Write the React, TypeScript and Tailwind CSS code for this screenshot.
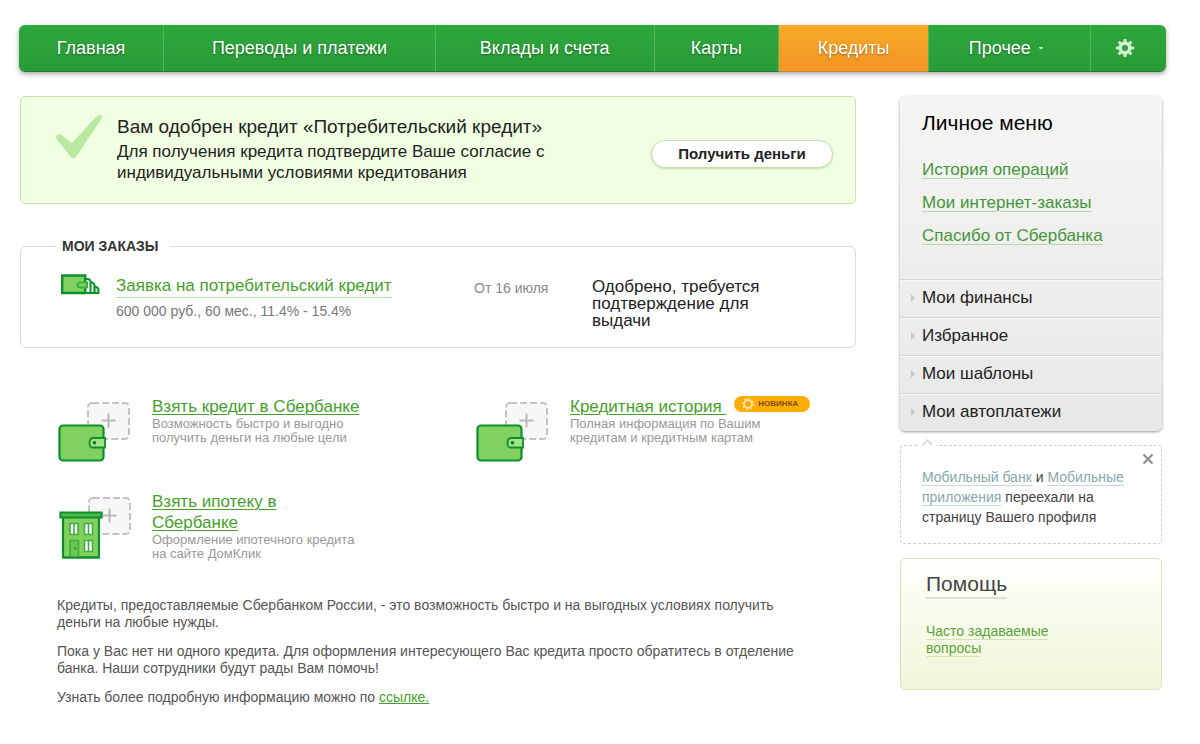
import type { ReactNode } from 'react';

const navItems = [
  { label: 'Главная', size: 'grow-[145]' },
  { label: 'Переводы и платежи', size: 'grow-[272]' },
  { label: 'Вклады и счета', size: 'grow-[219]' },
  { label: 'Карты', size: 'grow-[124]' },
  { label: 'Кредиты', size: 'grow-[150]', active: true },
  { label: 'Прочее', size: 'grow-[162]', more: true },
];

const personalLinks = ['История операций', 'Мои интернет-заказы', 'Спасибо от Сбербанка'];
const sections = ['Мои финансы', 'Избранное', 'Мои шаблоны', 'Мои автоплатежи'];

const gearTeeth = [0, 45, 90, 135, 180, 225, 270, 315];

function GearIcon() {
  return (
    <svg className="h-5 w-5" viewBox="0 0 20 20" aria-hidden="true">
      <g fill="#d3efd5">
        {gearTeeth.map((angle) => (
          <path key={angle} d="M8.2 5 8.7.9h2.6l.5 4.1z" transform={`rotate(${angle} 10 10)`} />
        ))}
      </g>
      <circle cx="10" cy="10" r="4.7" fill="none" stroke="#d3efd5" strokeWidth="3.4" />
    </svg>
  );
}

function CheckIcon() {
  return (
    <svg className="h-11 w-[46px]" viewBox="0 0 46 44" aria-hidden="true">
      <path
        d="M0 22.5C0 20 2.500 18.500 4.500 19.500L16 28 40.500 1.500C42.500-.5 45.500 0 45.500 0 46.500 1 46 3 45.500 3.800L20.500 41C19 43.500 16.500 44 14.500 41.500L1 24.500Q0 23.500 0 22.500z"
        fill="#b9e8a0"
      />
    </svg>
  );
}

function RequestIcon() {
  return (
    <svg className="h-[22px] w-[39px]" viewBox="0 0 39 22" aria-hidden="true">
      <g stroke="#0d912f" strokeWidth="2">
        <path d="M33 12.500q4.500 0 4.500 4.500v2H33z" fill="#c7efb5" />
        <path d="M29 8.500h1q3.500 0 3.500 3.500v7H29z" fill="#e6f7df" />
        <path d="M23 5h3.500q3 0 3 3v11H23z" fill="#fff" />
        <path d="M1.200 1.500h23v17.500h-23z" fill="#81d160" strokeWidth="2.400" />
        <path d="M26 8.500h-6.500q-3 0-3 2.500t3 2.500H26z" fill="#81d160" stroke="#3cae45" />
      </g>
    </svg>
  );
}

function PlusFrame() {
  return (
    <g fill="none" stroke="#c3c3c3" strokeWidth="2">
      <rect x="30" y="3" width="41" height="36" rx="4" fill="#f7f7f7" strokeDasharray="7 3" />
      <path d="M50.500 13.500v14M43.500 20.500h14" stroke="#b9b9b9" />
    </g>
  );
}

function WalletIcon() {
  return (
    <svg className="h-[64px] w-[74px]" viewBox="0 0 74 64" aria-hidden="true">
      <PlusFrame />
      <rect x="1.500" y="25.500" width="44" height="35" rx="3.500" fill="#81d160" stroke="#0d912f" strokeWidth="2.200" />
      <path d="M47 38H35.500q-4 0-4 5t4 4.500H47z" fill="#a4e283" stroke="#0d912f" strokeWidth="1.800" />
      <circle cx="36.500" cy="42.800" r="1.800" fill="#0d752b" />
    </svg>
  );
}

function HouseIcon() {
  return (
    <svg className="h-[64px] w-[74px]" viewBox="0 0 74 64" aria-hidden="true">
      <g transform="translate(1 0)">
        <PlusFrame />
      </g>
      <g stroke="#0d8f2c" strokeWidth="2.200">
        <path d="M5 20h36v42.500H5z" fill="#7fd05d" />
        <path d="M2.500 17.500h41v5h-41z" fill="#4dbd4f" />
      </g>
      <g stroke="#3fae45" strokeWidth="1.600">
        <path d="M12 28.500h8v11h-8zM26.500 28.500h8v11h-8zM26.500 45.500h8v11h-8z" fill="#fff" />
        <path d="M16 29v10M30.500 29v10M30.500 46v10" />
        <path d="M12 62V45.500h8.500V62" fill="#6ac552" />
      </g>
      <path d="M5 62.500h36" stroke="#0d8f2c" strokeWidth="2.200" />
      <circle cx="17.500" cy="53.500" r="1" fill="#168333" />
    </svg>
  );
}

function NewBadge() {
  return (
    <span className="flex h-4 items-center gap-1 rounded-full bg-[#ffae08] pl-2 pr-3 text-[8px] font-bold uppercase leading-4 text-[#7c4d00]">
      <svg className="h-3 w-3" viewBox="0 0 12 12" aria-hidden="true">
        <circle cx="6" cy="6" r="4" fill="none" stroke="#fff0c8" strokeWidth="1.500" />
        <circle cx="6" cy="6" r="5.200" fill="none" stroke="#fff0c8" strokeWidth="1.500" strokeDasharray="1.500 2.580" />
      </svg>
      Новинка
    </span>
  );
}

type OfferProps = { icon: ReactNode; title: string; text: string; isNew?: boolean };

function Offer({ icon, title, text, isNew }: OfferProps) {
  return (
    <article className="flex min-h-[95px] gap-5 pl-[38px]">
      <div className="mt-1 shrink-0">{icon}</div>
      <div>
        <h3 className="flex max-w-[212px] gap-2 text-[17px] leading-[21px]">
          <a
            href="#"
            className={
              isNew
                ? 'shrink-0 whitespace-pre text-[#45a12b] underline decoration-1 underline-offset-2'
                : 'text-[#45a12b] underline decoration-1 underline-offset-2'
            }
          >
            {isNew ? title + ' ' : title}
          </a>
          {isNew && <NewBadge />}
        </h3>
        <p className="w-[208px] text-[13px] leading-[14px] text-[#999]">{text}</p>
      </div>
    </article>
  );
}

export default function App() {
  return (
    <div className="bg-white pb-8 pl-5 pr-[35px] pt-[25px] font-['Liberation_Sans',Arial,sans-serif] text-[#222]">
      <nav className="-mx-px flex h-[47px] overflow-hidden rounded-md bg-linear-to-b from-[#2da83c] to-[#2a9b37] shadow-[0_2px_5px_rgba(0,0,0,0.35)]">
        {navItems.map((item) => (
          <a
            key={item.label}
            href="#"
            className={`${item.size} ${
              item.active ? 'bg-linear-to-b from-[#f7ab26] to-[#f49425]' : ''
            } flex basis-0 items-center justify-center border-b border-r border-b-black/20 border-r-[#55b45c] text-lg text-white [text-shadow:0_1px_2px_rgba(0,0,0,0.4)]`}
          >
            {item.label}
            {item.more && <span className="ml-2 mr-2 h-[2px] w-1 rounded-b-sm bg-[#d3efd5]" />}
          </a>
        ))}
        <button
          type="button"
          aria-label="Настройки"
          className="flex grow-[75] basis-0 items-center justify-center border-b border-b-black/20"
        >
          <span className="mr-[7px]">
            <GearIcon />
          </span>
        </button>
      </nav>

      <div className="mr-[3px] mt-6 flex items-start gap-11">
        <main className="min-w-0 grow">
          <section className="flex h-[108px] items-start rounded-[5px] border border-[#c9e3ac] bg-[#f1ffe2] pl-[35px] pr-[22px]">
            <div className="mt-[18px] shrink-0">
              <CheckIcon />
            </div>
            <div className="ml-[15px] mt-[18px] grow">
              <h1 className="text-[19px] leading-6">Вам одобрен кредит «Потребительский кредит»</h1>
              <p className="mt-[2px] w-[440px] text-[17px] leading-[21px]">
                Для получения кредита подтвердите Ваше согласие с индивидуальными условиями кредитования
              </p>
            </div>
            <button
              type="button"
              className="mt-[43px] h-7 w-[182px] shrink-0 rounded-full border border-[#c6dfa9] bg-white text-[15px] font-bold shadow-[0_1px_2px_rgba(120,160,80,0.35)]"
            >
              Получить деньги
            </button>
          </section>

          <fieldset className="mt-[34px] rounded-md border border-[#dcdcdc] pb-[18px]">
            <legend className="ml-[35px] pl-[6px] pr-[11px] text-sm font-bold leading-4 text-[#333]">МОИ ЗАКАЗЫ</legend>
            <div className="flex items-start pl-10 pt-[20px]">
              <RequestIcon />
              <div className="ml-4 w-[358px]">
                <a href="#" className="inline-block border-b border-[#b5dca5] text-[17px] leading-[22px] text-[#45a12b]">
                  Заявка на потребительский кредит
                </a>
                <p className="mt-[5px] text-sm leading-4 text-[#777]">600 000 руб., 60 мес., 11.4% - 15.4%</p>
              </div>
              <time className="w-[118px] pt-1 text-sm leading-5 text-[#888]">От 16 июля</time>
              <p className="w-[180px] pt-[4px] text-[17px] leading-[17px]">
                Одобрено, требуется подтверждение для выдачи
              </p>
            </div>
          </fieldset>

          <section className="mt-12 grid grid-cols-2">
            <Offer
              icon={<WalletIcon />}
              title="Взять кредит в Сбербанке"
              text="Возможность быстро и выгодно получить деньги на любые цели"
            />
            <Offer
              icon={<WalletIcon />}
              title="Кредитная история"
              text="Полная информация по Вашим кредитам и кредитным картам"
              isNew
            />
            <Offer
              icon={<HouseIcon />}
              title="Взять ипотеку в Сбербанке"
              text="Оформление ипотечного кредита на сайте ДомКлик"
            />
          </section>

          <section className="mt-[11px] flex flex-col gap-3 pl-[37px] pr-10 text-sm leading-[17px] text-[#555]">
            <p>
              Кредиты, предоставляемые Сбербанком России, - это возможность быстро и на выгодных условиях получить деньги
              на любые нужды.
            </p>
            <p>
              Пока у Вас нет ни одного кредита. Для оформления интересующего Вас кредита просто обратитесь в отделение
              банка. Наши сотрудники будут рады Вам помочь!
            </p>
            <p>
              Узнать более подробную информацию можно по{' '}
              <a href="#" className="text-[#45a12b] underline">
                ссылке.
              </a>
            </p>
          </section>
        </main>

        <aside className="w-[262px] shrink-0">
          <section className="rounded-md bg-linear-to-b from-[#f5f5f3] to-[#e8e8e8] pt-[13px] shadow-[0_1px_3px_rgba(0,0,0,0.4)]">
            <h2 className="px-[22px] text-[21px] leading-7 text-black">Личное меню</h2>
            <ul className="flex flex-col gap-[13px] px-[22px] pb-[33px] pt-[23px] text-[17px] leading-5">
              {personalLinks.map((label) => (
                <li key={label}>
                  <a
                    href="#"
                    className="text-[#45963a] underline decoration-[#b5d8aa] decoration-1 underline-offset-3"
                  >
                    {label}
                  </a>
                </li>
              ))}
            </ul>
            {sections.map((label) => (
              <button
                key={label}
                type="button"
                className="flex h-[38px] w-full items-center gap-[7px] border-t border-[#d4d4d4] pb-[2px] pl-[11px] text-[17px] shadow-[inset_0_1px_0_#f8f8f8]"
              >
                <svg className="h-2 w-1" viewBox="0 0 4 8" aria-hidden="true">
                  <path d="M0 0l4 4-4 4z" fill="#c6c6c6" />
                </svg>
                {label}
              </button>
            ))}
          </section>

          <section className="relative mt-[14px] rounded-[4px] border border-dashed border-[#cfcfcf] px-[21px] pb-4 pt-[21px] text-sm leading-5 text-[#444]">
            <svg className="absolute -top-2 left-[18px] h-3 w-[17px] bg-white" viewBox="0 0 17 12" aria-hidden="true">
              <path d="M4 7l4.500-5L13 7" fill="none" stroke="#d2d2d2" strokeWidth="1.500" />
            </svg>
            <button type="button" aria-label="Закрыть" className="absolute right-[7px] top-[7px]">
              <svg className="h-3 w-3" viewBox="0 0 12 12" aria-hidden="true">
                <path d="M1.500 1.500l9 9M10.500 1.500l-9 9" stroke="#8c8c8c" strokeWidth="2" />
              </svg>
            </button>
            <a href="#" className="border-b border-[#c5dada] text-[#86a8aa]">
              Мобильный банк
            </a>{' '}
            и{' '}
            <a href="#" className="border-b border-[#c5dada] text-[#86a8aa]">
              Мобильные приложения
            </a>{' '}
            переехали на страницу Вашего профиля
          </section>

          <section className="mt-[14px] h-[132px] rounded-[5px] border border-[#dfe0c6] bg-linear-to-b from-[#fffffb] to-[#f0f6d8] px-[25px] pt-[11px]">
            <h2 className="inline-block border-b-2 border-[#deded2] text-[21px] leading-[27px] text-[#444]">Помощь</h2>
            <p className="mt-6 w-[140px] text-sm leading-[17px]">
              <a href="#" className="border-b border-[#cfe6b4] text-[#5ba33c]">
                Часто задаваемые вопросы
              </a>
            </p>
          </section>
        </aside>
      </div>
    </div>
  );
}
